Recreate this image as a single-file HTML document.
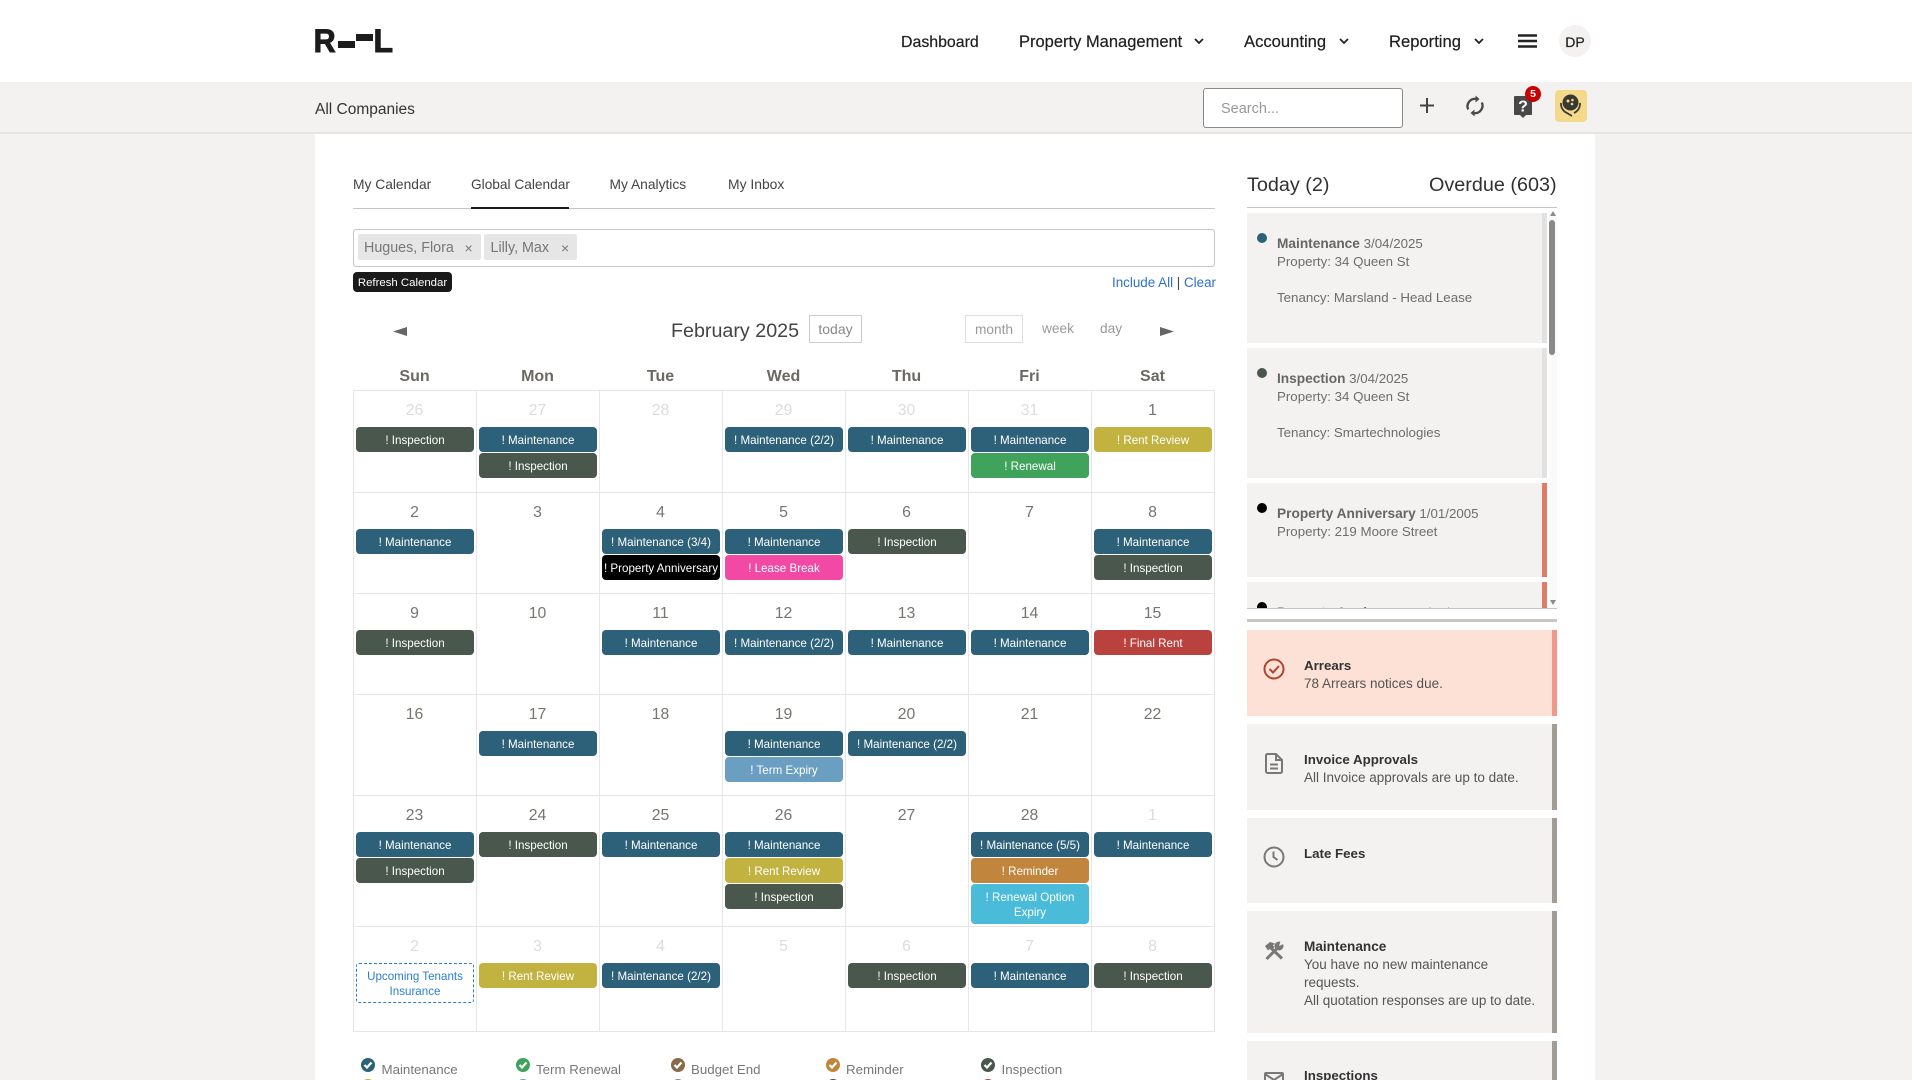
<!DOCTYPE html>
<html lang="en">
<head>
<meta charset="utf-8">
<title>Global Calendar</title>
<style>
html,body{margin:0;padding:0;width:1912px;height:1080px;overflow:hidden}
body{background:#f3f2f1;font-family:"Liberation Sans",Arial,sans-serif;color:#323130}
#w{position:relative;width:1912px;height:1080px;overflow:hidden;background:#f3f2f1}
.a,.t,.e,.d,.l,svg.i{position:absolute}
.t{white-space:nowrap;line-height:20px;height:20px}
.nav{color:#1f1f1f;top:32px;-webkit-text-stroke:.2px #1f1f1f}
.tab{font-size:13.8px;color:#444;top:175px}
.hd{font-size:16px;font-weight:bold;color:#6b6964;top:367px;width:123px;text-align:center}
.l{background:#e6e6e6}
.r{position:absolute;left:0;width:1912px;height:0}
.d{width:123px;text-align:center;font-size:15.8px;line-height:20px;top:11px;color:#77756f}
.o{color:#dcdcdc}
.e{width:118px;height:25px;line-height:27px;top:37px;border-radius:4px;color:#fff;font-size:11.6px;text-align:center;white-space:nowrap}
.s{top:63px}.u{top:89px}
.c0{left:356px}.c1{left:479px}.c2{left:602px}.c3{left:725px}.c4{left:848px}.c5{left:971px}.c6{left:1094px}
.k0{left:353px}.k1{left:476px}.k2{left:599px}.k3{left:722px}.k4{left:845px}.k5{left:968px}.k6{left:1091px}
.m{background:#2d617a}.n{background:#4a574c}.y{background:#c2b240}.g{background:#3fa35b}
.b{background:#000}.p{background:#f249a4}.f{background:#b9423e}.x{background:#6a9fc2}.w{background:#c2853e}.v{background:#4abbd8}
.leg{font-size:13.3px;color:#777;top:1060px}
.card{position:absolute;left:0;width:295px;background:#f3f2f1;border-right:5px solid #e1e1e1}
.card.od{border-right-color:#e07b67}
.dot{position:absolute;left:10px;top:20px;width:10px;height:10px;border-radius:50%}
.ct{position:absolute;left:30px;top:22px;font-size:13.3px;line-height:18px;color:#6e6d6a;white-space:nowrap}
.ct b{color:#666;font-size:13.7px}
.al{position:absolute;left:1247px;width:305px;background:#f3f2f1;border-right:5px solid #a19d94}
.al .tx{position:absolute;left:57px;font-size:13.5px;line-height:18px;color:#555;width:240px}
.al b{color:#333;font-size:13.3px}
</style>
</head>
<body>
<div id="w">
<!-- header -->
<div class="a" style="left:0;top:0;width:1912px;height:82px;background:#fff"></div>
<svg class="i" style="left:310px;top:20px" width="90" height="40" viewBox="0 0 90 40">
<text x="3.600" y="32" font-family="Liberation Sans" font-weight="bold" font-size="32" fill="#1c1c1c" textLength="22" lengthAdjust="spacingAndGlyphs" stroke="#1c1c1c" stroke-width="1">R</text>
<rect x="28" y="21" width="17" height="7" fill="#1c1c1c"/><rect x="46" y="14" width="17" height="7" fill="#1c1c1c"/>
<text x="63.500" y="32" font-family="Liberation Sans" font-weight="bold" font-size="32" fill="#1c1c1c" textLength="19.500" lengthAdjust="spacingAndGlyphs" stroke="#1c1c1c" stroke-width="1">L</text>
</svg>
<div class="t nav" style="left:901px;top:33px;font-size:15.9px">Dashboard</div>
<div class="t nav" style="left:1019px;font-size:16.5px">Property Management</div>
<div class="t nav" style="left:1244px;font-size:16.6px">Accounting</div>
<div class="t nav" style="left:1389px;font-size:16.6px">Reporting</div>
<svg class="i" style="left:1194px;top:38px" width="10" height="7"><path d="M1 1l4 4 4-4" fill="none" stroke="#222" stroke-width="1.8"/></svg>
<svg class="i" style="left:1339px;top:38px" width="10" height="7"><path d="M1 1l4 4 4-4" fill="none" stroke="#222" stroke-width="1.8"/></svg>
<svg class="i" style="left:1474px;top:38px" width="10" height="7"><path d="M1 1l4 4 4-4" fill="none" stroke="#222" stroke-width="1.8"/></svg>
<svg class="i" style="left:1518px;top:34px" width="19" height="14"><path d="M0 1.500h19M0 7h19M0 12.500h19" stroke="#222" stroke-width="2.400"/></svg>
<div class="a" style="left:1559px;top:25px;width:32px;height:32px;border-radius:50%;background:#f3f2f1;text-align:center;line-height:34px;font-size:14px;color:#222;-webkit-text-stroke:.2px #222">DP</div>

<!-- sub header -->
<div class="a" style="left:0;top:132px;width:1912px;height:2px;background:#e6e5e3"></div>
<div class="t" style="left:315px;top:100px;font-size:15.500px;color:#333">All Companies</div>
<div class="a" style="left:1203px;top:88px;width:198px;height:38px;background:#fff;border:1px solid #8a8886;border-radius:3px"></div>
<div class="t" style="left:1221px;top:99px;font-size:14.500px;color:#9a9896">Search...</div>
<svg class="i" style="left:1419px;top:97px" width="16" height="17"><path d="M8 1v15M1 8.500h14" stroke="#444" stroke-width="2"/></svg>
<svg class="i" style="left:1465px;top:95px" width="20" height="22" viewBox="0 0 20 22"><path d="M3.200 14.500A7.500 7.500 0 0 1 11.500 4" fill="none" stroke="#4a4a4a" stroke-width="2.300"/><path d="M16.800 7.500A7.500 7.500 0 0 1 8.500 18" fill="none" stroke="#4a4a4a" stroke-width="2.300"/><path d="M10.500 .5l4 3.500-4 3.500z" fill="#4a4a4a"/><path d="M9.500 14.500l-4 3.500 4 3.500z" fill="#4a4a4a"/></svg>
<svg class="i" style="left:1514px;top:96px" width="18" height="23"><path d="M1 0h16a1 1 0 0 1 1 1v17a1 1 0 0 1-1 1h-5l-3 3-3-3H1a1 1 0 0 1-1-1V1a1 1 0 0 1 1-1z" fill="#4a4846"/><text x="9" y="15.500" text-anchor="middle" font-family="Liberation Sans" font-weight="bold" font-size="16" fill="#fff">?</text></svg>
<div class="a" style="left:1525px;top:86px;width:16px;height:16px;border-radius:50%;background:#c80000;color:#fff;font-size:10.500px;font-weight:bold;line-height:16px;text-align:center">5</div>
<div class="a" style="left:1555px;top:90px;width:32px;height:32px;border-radius:4px;background:#f5d98a"></div>
<svg class="i" style="left:1558px;top:92px" width="26" height="28" viewBox="0 0 26 28"><circle cx="12.500" cy="10.500" r="8" fill="#3a3833"/><circle cx="10" cy="9" r="1.500" fill="#f5d98a"/><circle cx="14.500" cy="8" r="1.300" fill="#f5d98a"/><circle cx="14" cy="12" r="1.300" fill="#f5d98a"/><path d="M3 11a10 10 0 0 0 6 10l5 3M22 11a10 10 0 0 1-6 10" fill="none" stroke="#3a3833" stroke-width="1.800"/></svg>

<!-- main panel -->
<div class="a" style="left:315px;top:134px;width:1280px;height:946px;background:#fff"></div>

<!-- tabs -->
<div class="t tab" style="left:353px">My Calendar</div>
<div class="t tab" style="left:471px;font-size:13.7px">Global Calendar</div>
<div class="t tab" style="left:609.500px">My Analytics</div>
<div class="t tab" style="left:728px;top:174px;font-size:13.9px">My Inbox</div>
<div class="a" style="left:353px;top:208px;width:862px;height:1px;background:#c8c6c0"></div>
<div class="a" style="left:471px;top:207px;width:98px;height:2px;background:#1a1a1a"></div>

<!-- filter -->
<div class="a" style="left:353px;top:229px;width:860px;height:36px;border:1px solid #c8c6c4;border-radius:3px"></div>
<div class="a" style="left:358px;top:234px;width:123px;height:26px;background:#e6e6e6;border-radius:2px"></div>
<div class="a" style="left:484px;top:234px;width:93px;height:26px;background:#e6e6e6;border-radius:2px"></div>
<div class="t" style="left:364px;top:238px;font-size:14.300px;color:#777">Hugues, Flora</div>
<div class="t" style="left:464.500px;top:238px;font-size:14px;color:#777">×</div>
<div class="t" style="left:490.500px;top:238px;font-size:14.300px;color:#777">Lilly, Max</div>
<div class="t" style="left:561px;top:238px;font-size:14px;color:#777">×</div>
<div class="a" style="left:353px;top:272px;width:99px;height:20px;background:#1a1a1a;border-radius:4px;color:#fff;font-size:11.400px;line-height:22px;text-align:center">Refresh Calendar</div>
<div class="t" style="left:1112px;top:273px;font-size:13.400px;color:#2f6fce">Include All <span style="color:#444">|</span> Clear</div>

<!-- calendar toolbar -->
<svg class="i" style="left:393px;top:327px" width="15" height="9"><path d="M0 4.500L14 0v9z" fill="#666"/></svg>
<div class="t" style="left:671px;top:321px;font-size:19.700px;color:#444">February 2025</div>
<div class="a" style="left:809px;top:315px;width:51px;height:26px;border:1px solid #ccc;text-align:center;font-size:14px;line-height:27px;color:#888">today</div>
<div class="a" style="left:965px;top:315px;width:56px;height:26px;border:1px solid #ddd;text-align:center;font-size:13.700px;line-height:27px;color:#999">month</div>
<div class="t" style="left:1042px;top:319px;font-size:13.700px;color:#999">week</div>
<div class="t" style="left:1100px;top:319px;font-size:13.700px;color:#999">day</div>
<svg class="i" style="left:1160px;top:327px" width="15" height="9"><path d="M14 4.500L0 0v9z" fill="#666"/></svg>

<!-- day headings -->
<div class="t hd k0">Sun</div><div class="t hd k1">Mon</div><div class="t hd k2">Tue</div><div class="t hd k3">Wed</div><div class="t hd k4">Thu</div><div class="t hd k5">Fri</div><div class="t hd k6">Sat</div>

<!-- grid lines -->
<div class="l" style="left:353px;top:390px;width:862px;height:1px"></div>
<div class="l" style="left:353px;top:492px;width:862px;height:1px"></div>
<div class="l" style="left:353px;top:593px;width:862px;height:1px"></div>
<div class="l" style="left:353px;top:694px;width:862px;height:1px"></div>
<div class="l" style="left:353px;top:795px;width:862px;height:1px"></div>
<div class="l" style="left:353px;top:926px;width:862px;height:1px"></div>
<div class="l" style="left:353px;top:1031px;width:862px;height:1px"></div>
<div class="l" style="left:353px;top:390px;width:1px;height:642px"></div>
<div class="l" style="left:476px;top:390px;width:1px;height:642px"></div>
<div class="l" style="left:599px;top:390px;width:1px;height:642px"></div>
<div class="l" style="left:722px;top:390px;width:1px;height:642px"></div>
<div class="l" style="left:845px;top:390px;width:1px;height:642px"></div>
<div class="l" style="left:968px;top:390px;width:1px;height:642px"></div>
<div class="l" style="left:1091px;top:390px;width:1px;height:642px"></div>
<div class="l" style="left:1214px;top:390px;width:1px;height:642px"></div>

<!-- week 1 -->
<div class="r" style="top:390px">
<div class="d o k0">26</div><div class="d o k1">27</div><div class="d o k2">28</div><div class="d o k3">29</div><div class="d o k4">30</div><div class="d o k5">31</div><div class="d k6">1</div>
<div class="e n c0">! Inspection</div>
<div class="e m c1">! Maintenance</div><div class="e n c1 s">! Inspection</div>
<div class="e m c3">! Maintenance (2/2)</div>
<div class="e m c4">! Maintenance</div>
<div class="e m c5">! Maintenance</div><div class="e g c5 s">! Renewal</div>
<div class="e y c6">! Rent Review</div>
</div>
<!-- week 2 -->
<div class="r" style="top:492px">
<div class="d k0">2</div><div class="d k1">3</div><div class="d k2">4</div><div class="d k3">5</div><div class="d k4">6</div><div class="d k5">7</div><div class="d k6">8</div>
<div class="e m c0">! Maintenance</div>
<div class="e m c2">! Maintenance (3/4)</div><div class="e b c2 s">! Property Anniversary</div>
<div class="e m c3">! Maintenance</div><div class="e p c3 s">! Lease Break</div>
<div class="e n c4">! Inspection</div>
<div class="e m c6">! Maintenance</div><div class="e n c6 s">! Inspection</div>
</div>
<!-- week 3 -->
<div class="r" style="top:593px">
<div class="d k0">9</div><div class="d k1">10</div><div class="d k2">11</div><div class="d k3">12</div><div class="d k4">13</div><div class="d k5">14</div><div class="d k6">15</div>
<div class="e n c0">! Inspection</div>
<div class="e m c2">! Maintenance</div>
<div class="e m c3">! Maintenance (2/2)</div>
<div class="e m c4">! Maintenance</div>
<div class="e m c5">! Maintenance</div>
<div class="e f c6">! Final Rent</div>
</div>
<!-- week 4 -->
<div class="r" style="top:694px">
<div class="d k0">16</div><div class="d k1">17</div><div class="d k2">18</div><div class="d k3">19</div><div class="d k4">20</div><div class="d k5">21</div><div class="d k6">22</div>
<div class="e m c1">! Maintenance</div>
<div class="e m c3">! Maintenance</div><div class="e x c3 s">! Term Expiry</div>
<div class="e m c4">! Maintenance (2/2)</div>
</div>
<!-- week 5 -->
<div class="r" style="top:795px">
<div class="d k0">23</div><div class="d k1">24</div><div class="d k2">25</div><div class="d k3">26</div><div class="d k4">27</div><div class="d k5">28</div><div class="d o k6">1</div>
<div class="e m c0">! Maintenance</div><div class="e n c0 s">! Inspection</div>
<div class="e n c1">! Inspection</div>
<div class="e m c2">! Maintenance</div>
<div class="e m c3">! Maintenance</div><div class="e y c3 s">! Rent Review</div><div class="e n c3 u">! Inspection</div>
<div class="e m c5">! Maintenance (5/5)</div><div class="e w c5 s">! Reminder</div>
<div class="e v c5 u" style="height:40px;line-height:15px;white-space:normal;padding-top:6px;box-sizing:border-box">! Renewal Option Expiry</div>
<div class="e m c6">! Maintenance</div>
</div>
<!-- week 6 -->
<div class="r" style="top:926px">
<div class="d o k0">2</div><div class="d o k1">3</div><div class="d o k2">4</div><div class="d o k3">5</div><div class="d o k4">6</div><div class="d o k5">7</div><div class="d o k6">8</div>
<div class="e c0" style="height:40px;box-sizing:border-box;border:1px dashed #2b7fd0;border-radius:3px;color:#2b7fd0;white-space:normal;line-height:15px;padding:5px 6px 0">Upcoming Tenants Insurance</div>
<div class="e y c1">! Rent Review</div>
<div class="e m c2">! Maintenance (2/2)</div>
<div class="e n c4">! Inspection</div>
<div class="e m c5">! Maintenance</div>
<div class="e n c6">! Inspection</div>
</div>

<!-- legend -->
<svg class="i" style="left:360px;top:1057px" width="760" height="23" viewBox="0 0 760 23">
<g fill="none" stroke="#fff" stroke-width="2.200">
<circle cx="8" cy="8" r="7" fill="#2d617a" stroke="none"/><path d="M4.500 8l2.500 2.500 4.500-5"/>
<circle cx="163" cy="8" r="7" fill="#3fa35b" stroke="none"/><path d="M159.500 8l2.500 2.500 4.500-5"/>
<circle cx="318" cy="8" r="7" fill="#8a6a4a" stroke="none"/><path d="M314.500 8l2.500 2.500 4.500-5"/>
<circle cx="473" cy="8" r="7" fill="#c2853e" stroke="none"/><path d="M469.500 8l2.500 2.500 4.500-5"/>
<circle cx="628" cy="8" r="7" fill="#4a574c" stroke="none"/><path d="M624.500 8l2.500 2.500 4.500-5"/>
<circle cx="8" cy="29" r="7" fill="#c2b240" stroke="none"/>
<circle cx="163" cy="29" r="7" fill="#6a9fc2" stroke="none"/>
<circle cx="318" cy="29" r="7" fill="#8a8886" stroke="none"/>
<circle cx="473" cy="29" r="7" fill="#4a4a4a" stroke="none"/>
<circle cx="628" cy="29" r="7" fill="#b9423e" stroke="none"/>
</g></svg>
<div class="t leg" style="left:381.500px">Maintenance</div>
<div class="t leg" style="left:536px">Term Renewal</div>
<div class="t leg" style="left:691px">Budget End</div>
<div class="t leg" style="left:846px">Reminder</div>
<div class="t leg" style="left:1001.500px">Inspection</div>

<!-- right column -->
<div class="t" style="left:1247px;top:175px;font-size:19.800px;color:#323130">Today (2)</div>
<div class="t" style="left:1429px;top:175px;font-size:19.800px;color:#323130">Overdue (603)</div>
<div class="a" style="left:1247px;top:207px;width:310px;height:1px;background:#c8c6c0"></div>

<div class="a" style="left:1247px;top:213px;width:310px;height:395px;overflow:hidden">
<div class="card" style="top:0;height:130px"><div class="dot" style="background:#2d617a"></div><div class="ct"><b>Maintenance</b> 3/04/2025<br>Property: 34 Queen St<br><br>Tenancy: Marsland - Head Lease</div></div>
<div class="card" style="top:135px;height:130px"><div class="dot" style="background:#4a574c"></div><div class="ct"><b>Inspection</b> 3/04/2025<br>Property: 34 Queen St<br><br>Tenancy: Smartechnologies</div></div>
<div class="card od" style="top:270px;height:94px"><div class="dot" style="background:#000"></div><div class="ct"><b>Property Anniversary</b> 1/01/2005<br>Property: 219 Moore Street</div></div>
<div class="card od" style="top:369px;height:94px"><div class="dot" style="background:#000"></div><div class="ct"><b>Property Anniversary</b> 1/01/2000<br>Property: 219 Moore Street</div></div>
<div class="a" style="left:302px;top:0;width:8px;height:395px;background:#fafafa"></div>
<div class="a" style="left:302px;top:7px;width:6px;height:135px;background:#8a8a8a;border-radius:3px"></div>
</div>
<svg class="i" style="left:1549px;top:210px" width="8" height="397"><path d="M1 6l3-5 3 5zM1 390l3 5 3-5z" fill="#8a8a8a"/></svg>
<div class="a" style="left:1247px;top:608px;width:310px;height:1px;background:#c8c6c4"></div>
<div class="a" style="left:1247px;top:619px;width:310px;height:3px;background:#c8c6c0"></div>

<div class="al" style="top:630px;height:86px;background:#fde0d6;border-right-color:#f0998a"><div class="tx" style="top:27px"><b>Arrears</b><br>78 Arrears notices due.</div></div>
<div class="al" style="top:724px;height:86px"><div class="tx" style="top:27px"><b>Invoice Approvals</b><br>All Invoice approvals are up to date.</div></div>
<div class="al" style="top:818px;height:85px"><div class="tx" style="top:27px"><b>Late Fees</b></div></div>
<div class="al" style="top:911px;height:122px"><div class="tx" style="top:27px;width:240px"><b style="font-size:13.6px">Maintenance</b><br>You have no new maintenance requests.<br>All quotation responses are up to date.</div></div>
<div class="al" style="top:1041px;height:39px"><div class="tx" style="top:26px"><b>Inspections</b></div></div>

<svg class="i" style="left:1263px;top:658px" width="22" height="22"><circle cx="11" cy="11" r="9.500" fill="none" stroke="#ad4630" stroke-width="2"/><path d="M6.500 11l3.500 3.500 6-6.500" fill="none" stroke="#ad4630" stroke-width="2"/></svg>
<svg class="i" style="left:1265px;top:753px" width="18" height="21"><path d="M1 2.500a1.500 1.500 0 0 1 1.500-1.500H11l6 6v11.500a1.500 1.500 0 0 1-1.500 1.500h-13A1.500 1.500 0 0 1 1 18.500z" fill="none" stroke="#7a7874" stroke-width="2"/><path d="M11 1v6h6M5 11.500h8M5 15.500h8" fill="none" stroke="#7a7874" stroke-width="2"/></svg>
<svg class="i" style="left:1263px;top:846px" width="22" height="22"><circle cx="11" cy="11" r="9.500" fill="none" stroke="#7a7874" stroke-width="2"/><path d="M10.500 5.500V11l4 3" fill="none" stroke="#7a7874" stroke-width="2"/></svg>
<svg class="i" style="left:1264px;top:941px" width="20" height="20" viewBox="0 0 20 20"><path d="M6.500 6.500L18 17.500" stroke="#7a7874" stroke-width="3" fill="none"/><path d="M1 5L6 1l5 1.500-2 2 1.500 1.500-3 3.500-2-1.500L4 9.500z" fill="#7a7874"/><path d="M2.500 18L13 7.500" stroke="#7a7874" stroke-width="3" fill="none"/><circle cx="15" cy="5" r="4.500" fill="#7a7874"/><path d="M15 5l2-6 3.500 3.500z" fill="#f3f2f1"/></svg>
<svg class="i" style="left:1264px;top:1072px" width="20" height="8"><path d="M1 16V2a1 1 0 0 1 1-1h16a1 1 0 0 1 1 1v14M1 2l9 6 9-6" fill="none" stroke="#7a7874" stroke-width="2"/></svg>
</div>
</body>
</html>
